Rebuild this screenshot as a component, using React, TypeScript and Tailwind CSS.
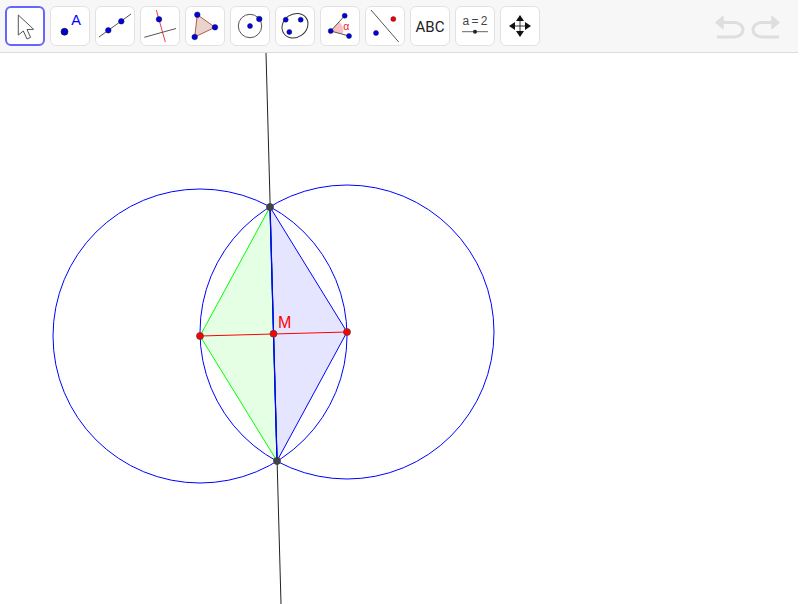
import React from "react";

const B = ({ x, y, r = 2.8 }: { x: number; y: number; r?: number }) => (
  <circle cx={x} cy={y} r={r} fill="#0000e0" stroke="#1a1a40" strokeWidth="0.5" />
);

const icons: React.ReactNode[] = [
  <path key="0" d="M13.3 9 L13.3 29 L18.3 25 L22 33 L25.6 31.3 L22 23.6 L28.6 23.3 Z" fill="#fff" stroke="#555" strokeWidth="1" strokeLinejoin="round" />,
  <g key="1">
    <circle cx="14.5" cy="25.7" r="3.5" fill="#0000d8" stroke="#111" strokeWidth="0.6" />
    <text x="26" y="19.3" fontSize="14.5" textAnchor="middle" fill="#0000ff" fontFamily="'Liberation Sans', sans-serif">A</text>
  </g>,
  <g key="2">
    <line x1="4" y1="31" x2="36" y2="8" stroke="#555" strokeWidth="1" />
    <B x={13.3} y={24.3} />
    <B x={26.3} y={15.3} />
  </g>,
  <g key="3">
    <line x1="16.3" y1="4" x2="25.3" y2="36" stroke="#f03848" strokeWidth="1" />
    <line x1="4.3" y1="31.3" x2="36" y2="22.5" stroke="#555" strokeWidth="1" />
    <B x={19} y={13.3} />
  </g>,
  <g key="4">
    <polygon points="12.3,8.7 30,21.3 9.7,31" fill="#ebd3cd" stroke="#b25a4a" strokeWidth="1" />
    <B x={12.3} y={8.7} />
    <B x={30} y={21.3} />
    <B x={9.7} y={31} />
  </g>,
  <g key="5">
    <circle cx="20" cy="20" r="11.7" fill="none" stroke="#555" strokeWidth="1" />
    <B x={20} y={20} r={2.5} />
    <B x={29.3} y={13} />
  </g>,
  <g key="6">
    <ellipse cx="20" cy="19.7" rx="13.6" ry="11.6" transform="rotate(-35 20 19.7)" fill="none" stroke="#333" strokeWidth="1" />
    <B x={10.7} y={13.7} r={2.5} />
    <B x={25.7} y={13.7} r={2.5} />
    <B x={14.3} y={26} r={2.5} />
  </g>,
  <g key="7">
    <path d="M10.7 25 L19.2 15.7 A12.5 12.5 0 0 1 22.7 28.3 Z" fill="#f8c0c4" />
    <line x1="10.7" y1="25" x2="24.7" y2="9.7" stroke="#555" strokeWidth="1" />
    <line x1="10.7" y1="25" x2="29" y2="30" stroke="#555" strokeWidth="1" />
    <B x={10.7} y={25} r={2.5} />
    <B x={24.7} y={9.7} r={2.5} />
    <B x={29} y={30} r={2.5} />
    <text x="26.3" y="23.5" fontSize="10.5" textAnchor="middle" fill="#f02030" fontFamily="'Liberation Sans', sans-serif">α</text>
  </g>,
  <g key="8">
    <line x1="6" y1="4" x2="33.7" y2="36" stroke="#555" strokeWidth="1" />
    <B x={11} y={27} r={2.5} />
    <circle cx="28.3" cy="13" r="2.5" fill="#f00000" stroke="#401010" strokeWidth="0.4" />
  </g>,
  <text key="9" x="20" y="26" fontSize="15" textAnchor="middle" fill="#222" fontFamily="Roboto, sans-serif">ABC</text>,
  <g key="10">
    <text x="20" y="19" fontSize="12" textAnchor="middle" fill="#444" fontFamily="'Liberation Sans', sans-serif" wordSpacing="-1">a = 2</text>
    <line x1="7" y1="25.7" x2="33" y2="25.7" stroke="#666" strokeWidth="1" />
    <circle cx="20" cy="25.7" r="2" fill="#222" />
  </g>,
  <g key="11" fill="#111">
    <line x1="20" y1="11" x2="20" y2="29" stroke="#333" strokeWidth="1" />
    <line x1="11" y1="20" x2="29" y2="20" stroke="#333" strokeWidth="1" />
    <polygon points="20,9 16,15 24,15" />
    <polygon points="20,31 16,25 24,25" />
    <polygon points="9,20 15,16 15,24" />
    <polygon points="31,20 25,16 25,24" />
  </g>,
];

export default function App() {
  return (
    <div className="flex h-[604px] w-[800px] flex-col overflow-hidden bg-white">
      <div className="flex h-[53px] w-[798px] shrink-0 items-start justify-between border-b border-[#dcdcdc] bg-[#f7f7f7] pt-[6px] pl-[5px] pr-[14px]">
        <div className="flex gap-[5px]">
          {icons.map((icon, i) => (
            <div
              key={i}
              className={
                i === 0
                  ? "h-[40px] w-[40px] rounded-[6px] border-2 border-[#6666ff] bg-white"
                  : "h-[40px] w-[40px] rounded-[6px] border border-[#e2e2e2] bg-white"
              }
            >
              <svg
                viewBox={i === 0 ? "2 2 36 36" : "1 1 38 38"}
                className="h-full w-full"
              >
                {icon}
              </svg>
            </div>
          ))}
        </div>
        <svg width="70" height="30" viewBox="0 0 70 30" className="mt-[9px]" fill="none" stroke="#dedede" strokeWidth="3">
          <path d="M8 7.5 H20 C32 7.5 32 22 20 22 H3" />
          <polygon points="2,7.5 9,1.5 9,13.5" fill="#dedede" stroke="#dedede" strokeWidth="1.5" strokeLinejoin="round" />
          <path d="M60 7.5 H48 C36 7.5 36 22 48 22 H65" />
          <polygon points="65,7.5 58,1.5 58,13.5" fill="#dedede" stroke="#dedede" strokeWidth="1.5" strokeLinejoin="round" />
        </svg>
      </div>
      <svg viewBox="0 53 800 551" className="block h-[551px] w-[800px]">
        <line x1="266" y1="53" x2="281" y2="604" stroke="#222" strokeWidth="1" />
        <polygon points="200,336 270,207 277,461" fill="#00ff00" fillOpacity="0.1" stroke="#00ff00" strokeWidth="1" />
        <polygon points="347,332 270,207 277,461" fill="#0000ff" fillOpacity="0.1" stroke="#0000ff" strokeWidth="1" />
        <circle cx="200" cy="336" r="147" fill="none" stroke="#0000ff" strokeWidth="1" />
        <circle cx="347" cy="332" r="147" fill="none" stroke="#0000ff" strokeWidth="1" />
        <line x1="270" y1="207" x2="277" y2="461" stroke="#0000ff" strokeWidth="1.2" />
        <line x1="200" y1="336" x2="347" y2="332" stroke="#ff0000" strokeWidth="1" />
        <circle cx="200" cy="336" r="3.5" fill="#ff0000" stroke="#444" strokeWidth="0.7" />
        <circle cx="347" cy="332" r="3.5" fill="#ff0000" stroke="#444" strokeWidth="0.7" />
        <circle cx="273.5" cy="333.7" r="3.5" fill="#ff0000" stroke="#444" strokeWidth="0.7" />
        <circle cx="270" cy="207" r="3.5" fill="#444" stroke="#333" strokeWidth="0.7" />
        <circle cx="277" cy="461" r="3.5" fill="#444" stroke="#333" strokeWidth="0.7" />
        <text x="278" y="328" fontSize="16" fill="#ff0000" fontFamily="'Liberation Sans', sans-serif">M</text>
      </svg>
    </div>
  );
}
